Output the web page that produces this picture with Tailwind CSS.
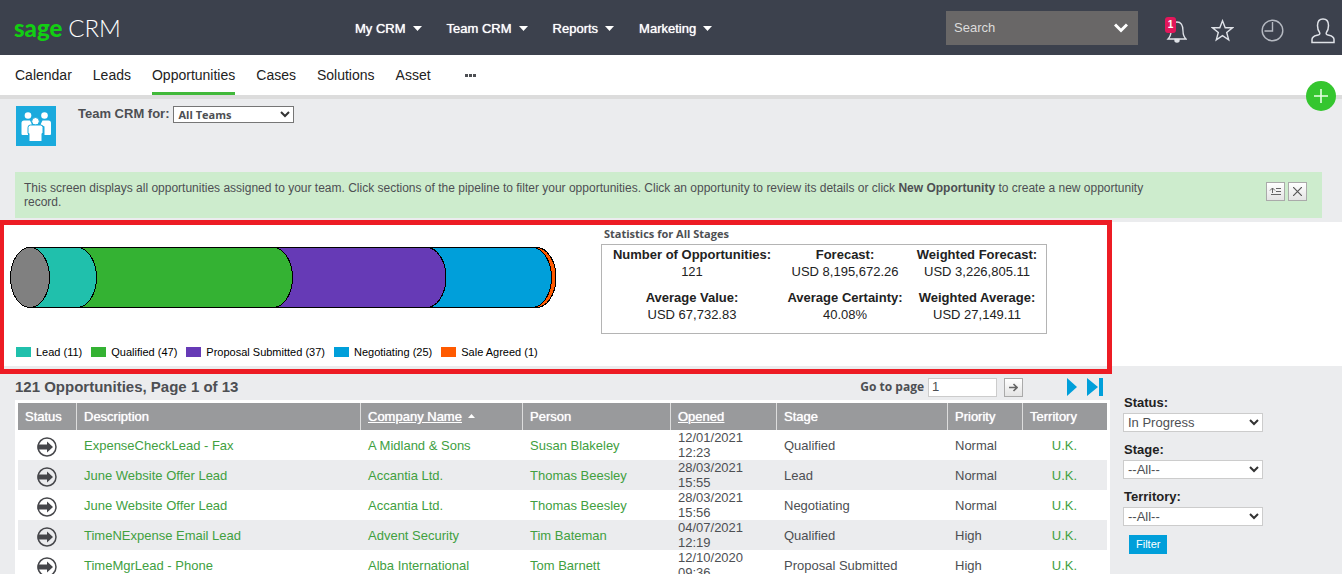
<!DOCTYPE html>
<html lang="en">
  <head>
    <meta charset="UTF-8" />
    <meta name="viewport" content="width=device-width, initial-scale=1.0" />
    <title>Sage CRM - Opportunities</title>
    <script src="https://cdn.jsdelivr.net/npm/@tailwindcss/browser@4"></script>
  </head>
  <body
    class="h-screen overflow-hidden bg-[#ebecee] font-['Liberation_Sans',Arial,sans-serif] text-[13px] text-[#4d4f53]"
  >
    <!-- Top bar -->
    <header class="flex h-[55px] items-center bg-[#3c414d] text-white">
      <a href="#" class="flex w-[355px] items-baseline gap-1.5 pl-3.5 font-['Lato',sans-serif]">
        <span class="text-[24px] leading-6 font-black text-[#12cf12]">sage</span>
        <span class="text-[24px] leading-6 font-light">CRM</span>
      </a>
      <nav class="flex items-center gap-[25px] pt-0.5 [text-shadow:0_0_1px_#fff]">
        <a href="#" class="flex items-center gap-[7px]">
          My CRM
          <svg class="h-[5px] w-[9px]" viewBox="0 0 9 5" fill="currentColor"><path d="M0 0h9L4.500 5z" /></svg>
        </a>
        <a href="#" class="flex items-center gap-[7px]">
          Team CRM
          <svg class="h-[5px] w-[9px]" viewBox="0 0 9 5" fill="currentColor"><path d="M0 0h9L4.500 5z" /></svg>
        </a>
        <a href="#" class="flex items-center gap-[7px]">
          Reports
          <svg class="h-[5px] w-[9px]" viewBox="0 0 9 5" fill="currentColor"><path d="M0 0h9L4.500 5z" /></svg>
        </a>
        <a href="#" class="flex items-center gap-[7px]">
          Marketing
          <svg class="h-[5px] w-[9px]" viewBox="0 0 9 5" fill="currentColor"><path d="M0 0h9L4.500 5z" /></svg>
        </a>
      </nav>

      <div class="mr-[27px] ml-auto flex h-[34px] w-[192px] items-center bg-[#696767] pr-2.5 pl-2">
        <input
          type="text"
          aria-label="Search"
          placeholder="Search"
          class="min-w-0 flex-1 outline-none placeholder:text-[#dcdcdc]"
        />
        <button aria-label="Search options">
          <svg class="h-2.5 w-[14px]" viewBox="0 0 14 10" fill="none" stroke="#fff" stroke-width="3"><path d="M1 1.500l6 6 6-6" /></svg>
        </button>
      </div>
      <div class="flex items-center pt-1.5 pr-[7px]">
        <button aria-label="Notifications" class="relative mr-6">
          <svg class="h-6 w-[22px]" viewBox="0 0 22 24" fill="none" stroke="#dfe2e8" stroke-width="1.300">
            <path d="M3 20c2-2 3-4 3-8 0-5 1.500-9 6-9s6 4 6 9c0 4 1 6 3 8z" />
            <path d="M10 20.500h4v1.500c-1 1.300-3 1.300-4 0z" fill="#dfe2e8" />
          </svg>
          <span class="absolute -top-0.5 left-0 h-4 w-[11px] rounded-[3px] bg-[#e3175b] text-[10px] leading-4 font-bold">1</span>
        </button>
        <button aria-label="Favorites" class="mr-[27px]">
          <svg class="h-[23px] w-[23px]" viewBox="0 0 23 23" fill="none" stroke="#dfe2e8" stroke-width="1.400">
            <path d="M11.500 1.800l2.700 7h7.300l-5.800 4.600 2 7.400-6.200-4.200-6.200 4.200 2-7.400L1.500 8.800h7.300z" />
          </svg>
        </button>
        <button aria-label="Recent" class="mr-[27px]">
          <svg class="h-[23px] w-[23px]" viewBox="0 0 23 23" fill="none" stroke="#b6bac2" stroke-width="1.400">
            <circle cx="11.500" cy="11.500" r="10.300" />
            <path d="M11.500 3v9H3.500" />
          </svg>
        </button>
        <button aria-label="My account">
          <svg class="h-[26px] w-6" viewBox="0 0 24 26" fill="none" stroke="#dfe2e8" stroke-width="1.500">
            <path d="M1 24.500v-3c0-3 2-3.600 5-4.300 2.600-.6 3.300-1.200 2.600-2.700C7 12.500 6.500 11 6.500 7.500 6.500 3.500 8.500 1 12 1s5.500 2.500 5.500 6.500c0 3.500-.5 5-2.100 7-.7 1.500 0 2.100 2.600 2.700 3 .7 5 1.300 5 4.300v3z" />
          </svg>
        </button>
      </div>
    </header>

    <!-- Tabs -->
    <nav class="relative flex h-11 gap-[21px] border-b-4 border-[#dcdcdc] bg-white px-[15px] text-[14px] leading-10 text-[#222]">
      <a href="#">Calendar</a>
      <a href="#">Leads</a>
      <a href="#" class="border-b-[3px] border-[#41b93a]">Opportunities</a>
      <a href="#">Cases</a>
      <a href="#">Solutions</a>
      <a href="#">Asset</a>
      <button aria-label="More tabs" class="ml-[13px] flex items-center gap-px">
        <span class="size-[3px] bg-[#4d4f53]"></span>
        <span class="size-[3px] bg-[#4d4f53]"></span>
        <span class="size-[3px] bg-[#4d4f53]"></span>
      </button>
      <button aria-label="Add new" class="absolute top-[26px] right-1.5 flex size-[30px] items-center justify-center rounded-full bg-[#35c62f]">
        <svg class="size-[14px]" viewBox="0 0 14 14" stroke="#e6ffe4" stroke-width="1.600"><path d="M7 0v14M0 7h14" /></svg>
      </button>
    </nav>

    <!-- Team selector -->
    <section class="flex h-[73px] items-start px-4 pt-[7px]">
      <svg class="mr-[22px] size-10" viewBox="0 0 40 40" fill="#fff">
        <rect width="40" height="40" fill="#1aaadd" />
        <circle cx="12" cy="9.500" r="3.300" />
        <circle cx="28.500" cy="9.500" r="3.300" />
        <path d="M5.500 17q0-2.500 2.500-2.500h6l2 4-4 2v8.500H6.500q-1 0-1-1zM35 17q0-2.500-2.500-2.500h-6l-2 4 4 2v8.500h5.500q1 0 1-1z" />
        <g stroke="#1aaadd" stroke-width="1">
          <circle cx="19.500" cy="15.300" r="3.800" />
          <path d="M12 21.500q0-2.500 2.500-2.500h10q2.500 0 2.500 2.500v6h-1v8H13v-8h-1z" />
        </g>
      </svg>
      <label for="team" class="mr-1 leading-4 font-bold">Team CRM for:</label>
      <span class="relative">
        <select id="team" class="block h-[17px] w-[121px] appearance-none border border-[#767676] bg-white pl-1 font-['Open_Sans',sans-serif] text-[11px] leading-[15px] font-bold">
          <option>All Teams</option>
        </select>
        <svg class="pointer-events-none absolute top-[5px] right-1 h-[7px] w-2.5" viewBox="0 0 10 7" fill="none" stroke="#333" stroke-width="2"><path d="M1 1l4 4 4-4" /></svg>
      </span>
    </section>

    <!-- Help text -->
    <section class="mr-5 mb-1 ml-[15px] flex h-[46px] items-start bg-[#cdeccd] pt-[9px] pr-[15px] pl-[9px] text-[12px] leading-[14px]">
      <p class="mr-[113px] flex-1">
        This screen displays all opportunities assigned to your team. Click sections of the pipeline to filter your opportunities. Click an opportunity to review its details or click
        <b>New Opportunity</b> to create a new opportunity record.
      </p>
      <div class="flex gap-[3px] pt-px">
        <button aria-label="Collapse help" class="flex size-[19px] items-center justify-center border border-[#aaa] bg-linear-to-b from-white to-[#e4e4e4]">
          <svg class="h-[9px] w-[13px]" viewBox="0 0 13 9" fill="none" stroke="#666"><path d="M3.500 6V1M1 3.500L3.500 1 6 3.500M7 1.500h5M7 4.500h5M2 7.500h10" /></svg>
        </button>
        <button aria-label="Close help" class="flex size-[19px] items-center justify-center border border-[#aaa] bg-linear-to-b from-white to-[#e4e4e4]">
          <svg class="size-[9px]" viewBox="0 0 9 9" stroke="#555" stroke-width="1.200"><path d="M0 0l9 9M9 0L0 9" /></svg>
        </button>
      </div>
    </section>

    <!-- Pipeline -->
    <section class="relative flex h-36 bg-white text-[#222]">
      <div class="w-[601px] pt-[25px] pl-2.5 text-black">
        <svg class="h-[62px] w-[548px]" viewBox="0 0 548 62" stroke="#000" shape-rendering="crispEdges">
          <path d="M20 .5H526.500A19.500 30 0 0 1 526.500 60.500H20z" fill="#ff5a00" />
          <path d="M20 .5H522A19.500 30 0 0 1 522 60.500H20z" fill="#009fda" />
          <path d="M20 .5H416.500A19.500 30 0 0 1 416.500 60.500H20z" fill="#663ab6" />
          <path d="M20 .5H263A19.500 30 0 0 1 263 60.500H20z" fill="#34b233" />
          <path d="M20 .5H67A19.500 30 0 0 1 67 60.500H20z" fill="#20c0ac" />
          <ellipse cx="20" cy="30.500" rx="19.500" ry="30" fill="#808080" />
        </svg>
        <ul class="flex gap-[9px] pt-9 pl-1.5 text-[11px] leading-[14px]">
          <li class="flex items-center gap-[5px]"><span class="h-2.5 w-[15px] bg-[#20c0ac]"></span>Lead (11)</li>
          <li class="flex items-center gap-[5px]"><span class="h-2.5 w-[15px] bg-[#34b233]"></span>Qualified (47)</li>
          <li class="flex items-center gap-[5px]"><span class="h-2.5 w-[15px] bg-[#663ab6]"></span>Proposal Submitted (37)</li>
          <li class="flex items-center gap-[5px]"><span class="h-2.5 w-[15px] bg-[#009fda]"></span>Negotiating (25)</li>
          <li class="flex items-center gap-[5px]"><span class="h-2.5 w-[15px] bg-[#ff5a00]"></span>Sale Agreed (1)</li>
        </ul>
      </div>
      <div class="pt-1">
        <h2 class="pb-0.5 pl-[3px] font-['Open_Sans',sans-serif] text-[11px] leading-4 font-bold text-[#4d4f53]">Statistics for All Stages</h2>
        <dl class="grid h-[90px] w-[446px] grid-cols-[180px_126px_138px] content-start gap-y-[9px] border border-[#b4b4b4] pt-px text-center leading-[17px]">
          <div><dt class="font-bold">Number of Opportunities:</dt><dd>121</dd></div>
          <div><dt class="font-bold">Forecast:</dt><dd>USD 8,195,672.26</dd></div>
          <div><dt class="font-bold">Weighted Forecast:</dt><dd>USD 3,226,805.11</dd></div>
          <div><dt class="font-bold">Average Value:</dt><dd>USD 67,732.83</dd></div>
          <div><dt class="font-bold">Average Certainty:</dt><dd>40.08%</dd></div>
          <div><dt class="font-bold">Weighted Average:</dt><dd>USD 27,149.11</dd></div>
        </dl>
      </div>
      <!-- Highlight frame -->
      <div class="pointer-events-none absolute -top-0.5 right-[230px] -bottom-2 left-0 border-[5px] border-l-4 border-[#ed1c24]"></div>
    </section>

    <div class="flex">
      <!-- Opportunity list -->
      <main class="mr-0.5 min-w-0 flex-1 pl-[15px]">
        <div class="flex h-[34px] items-center pt-2">
          <h1 class="text-[15px] font-bold">121 Opportunities, Page 1 of 13</h1>
          <label for="page" class="mr-1 ml-auto font-['Open_Sans',sans-serif] text-[12px] font-bold">Go to page</label>
          <input id="page" type="text" value="1" class="mr-[7px] h-[19px] w-[69px] border border-[#ccc] bg-white px-[3px]" />
          <button aria-label="Go" class="mr-11 flex size-[19px] items-center justify-center border border-[#aaa] bg-linear-to-b from-white to-[#e4e4e4]">
            <svg class="h-[9px] w-[9px]" viewBox="0 0 9 9" fill="none" stroke="#666" stroke-width="1.600"><path d="M0 4.500h8M4.500 1L8 4.500 4.500 8" /></svg>
          </button>
          <button aria-label="Next page" class="mr-2.5">
            <svg class="h-[18px] w-[10px]" viewBox="0 0 10 18" fill="#009fda"><path d="M0 0l10 9-10 9z" /></svg>
          </button>
          <button aria-label="Last page" class="mr-[7px]">
            <svg class="h-[18px] w-4" viewBox="0 0 16 18" fill="#009fda"><path d="M0 0l11 9-11 9zM12 0h4v18h-4z" /></svg>
          </button>
        </div>
        <div class="bg-white px-[3px] pt-[3px]">
          <table class="w-full table-fixed border-separate border-spacing-0 text-left leading-[15px]">
            <colgroup>
              <col class="w-[58px]" />
              <col />
              <col class="w-[162px]" />
              <col class="w-[148px]" />
              <col class="w-[106px]" />
              <col class="w-[171px]" />
              <col class="w-[75px]" />
              <col class="w-[85px]" />
            </colgroup>
            <thead>
              <tr class="h-[27px] bg-[#999a9c] text-white [text-shadow:0_0_1px_#fff] *:border-[#ddd] *:px-[7px] *:font-normal *:not-first:border-l">
                <th>Status</th>
                <th>Description</th>
                <th>
                  <a href="#" class="underline">Company Name</a>
                  <svg class="ml-0.5 inline h-1 w-[7px] -translate-y-0.5" viewBox="0 0 7 4" fill="#fff"><path d="M3.500 0L7 4H0z" /></svg>
                </th>
                <th>Person</th>
                <th><a href="#" class="underline">Opened</a></th>
                <th>Stage</th>
                <th>Priority</th>
                <th>Territory</th>
              </tr>
            </thead>
            <tbody id="rows"></tbody>
          </table>
        </div>
      </main>

      <!-- Filters -->
      <aside class="w-[230px] pt-[27px] pl-[11px] text-[#222]">
        <form class="flex flex-col items-start">
          <label for="status" class="pb-px pl-px leading-[19px] font-bold">Status:</label>
          <span class="relative mb-2">
            <select id="status" class="block h-[19px] w-[140px] appearance-none border border-[#ccc] bg-white pl-1 leading-[17px] text-[#4d4f53]">
              <option>In Progress</option>
            </select>
            <svg class="pointer-events-none absolute top-1.5 right-1 h-[7px] w-2.5" viewBox="0 0 10 7" fill="none" stroke="#333" stroke-width="2"><path d="M1 1l4 4 4-4" /></svg>
          </span>
          <label for="stage" class="pb-px pl-px leading-[19px] font-bold">Stage:</label>
          <span class="relative mb-2">
            <select id="stage" class="block h-[19px] w-[140px] appearance-none border border-[#ccc] bg-white pl-1 leading-[17px] text-[#4d4f53]">
              <option>--All--</option>
            </select>
            <svg class="pointer-events-none absolute top-1.5 right-1 h-[7px] w-2.5" viewBox="0 0 10 7" fill="none" stroke="#333" stroke-width="2"><path d="M1 1l4 4 4-4" /></svg>
          </span>
          <label for="territory" class="pb-px pl-px leading-[19px] font-bold">Territory:</label>
          <span class="relative mb-[9px]">
            <select id="territory" class="block h-[19px] w-[140px] appearance-none border border-[#ccc] bg-white pl-1 leading-[17px] text-[#4d4f53]">
              <option>--All--</option>
            </select>
            <svg class="pointer-events-none absolute top-1.5 right-1 h-[7px] w-2.5" viewBox="0 0 10 7" fill="none" stroke="#333" stroke-width="2"><path d="M1 1l4 4 4-4" /></svg>
          </span>
          <button type="button" class="ml-1.5 h-[19px] bg-[#009fda] px-[7px] text-[11px] text-white">Filter</button>
        </form>
      </aside>
    </div>

    <script>
      const opportunities = [
        ["ExpenseCheckLead - Fax", "A Midland & Sons", "Susan Blakeley", "12/01/2021 12:23", "Qualified", "Normal"],
        ["June Website Offer Lead", "Accantia Ltd.", "Thomas Beesley", "28/03/2021 15:55", "Lead", "Normal"],
        ["June Website Offer Lead", "Accantia Ltd.", "Thomas Beesley", "28/03/2021 15:56", "Negotiating", "Normal"],
        ["TimeNExpense Email Lead", "Advent Security", "Tim Bateman", "04/07/2021 12:19", "Qualified", "High"],
        ["TimeMgrLead - Phone", "Alba International", "Tom Barnett", "12/10/2020 09:36", "Proposal Submitted", "High"],
      ];

      const statusIcon = `
        <svg class="mx-auto mt-1 size-5" viewBox="0 0 20 20">
          <circle cx="10" cy="10" r="9" fill="none" stroke="#46474b" stroke-width="1.500" />
          <path d="M.5 7.500H10V4.500l6 5.500-6 5.500v-3H.5z" fill="#46474b" />
        </svg>`;

      document.getElementById("rows").innerHTML = opportunities
        .map(
          ([description, company, person, opened, stage, priority]) => `
          <tr class="h-[30px] even:bg-[#ebecee] *:px-2">
            <td>${statusIcon}</td>
            <td><a href="#" class="text-[#41a03f]">${description}</a></td>
            <td><a href="#" class="text-[#41a03f]">${company.replace("&", "&amp;")}</a></td>
            <td><a href="#" class="text-[#41a03f]">${person}</a></td>
            <td>${opened}</td>
            <td>${stage}</td>
            <td>${priority}</td>
            <td class="text-center"><a href="#" class="text-[#41a03f]">U.K.</a></td>
          </tr>`
        )
        .join("");
    </script>
  </body>
</html>
